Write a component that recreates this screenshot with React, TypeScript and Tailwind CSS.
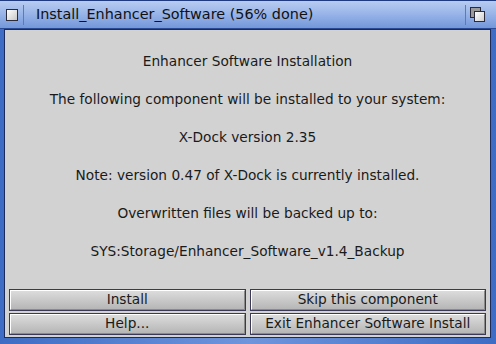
const LINES = [
  "Enhancer Software Installation",
  "The following component will be installed to your system:",
  "X-Dock version 2.35",
  "Note: version 0.47 of X-Dock is currently installed.",
  "Overwritten files will be backed up to:",
  "SYS:Storage/Enhancer_Software_v1.4_Backup",
];

const BUTTONS = ["Install", "Skip this component", "Help...", "Exit Enhancer Software Install"];

function Button({ label }: { label: string }) {
  return (
    <div className="h-[22px] border border-[#3a3a58] bg-[#3a3a58]">
      <div className="flex h-full items-center justify-center border-l border-t border-white border-r border-r-[#8a8a8a] border-b border-b-[#8a8a8a] bg-gradient-to-b from-[#dcdcdc] to-[#b6b6b6] text-[13.7px] leading-none text-[#1a1a1a]">
        {label}
      </div>
    </div>
  );
}

export default function App() {
  return (
    <div
      className="flex h-[344px] w-[496px] flex-col bg-gradient-to-r from-[#3e6cc4] via-[#6f95dc] to-[#3e6cc4]"
      style={{ fontFamily: '"DejaVu Sans", sans-serif' }}
    >
      <div className="flex h-[29px] shrink-0 items-center border-t border-[#1f3a80] border-b border-b-[#2a4a95] bg-gradient-to-b from-[#b8ccf1] via-[#97b3e8] to-[#7397da]">
        <div className="flex h-full w-[23px] items-center justify-center">
          <div className="h-[12px] w-[12px] border border-[#2a2a3a] bg-gradient-to-br from-white to-[#c8c8c8]" />
        </div>
        <div className="h-[20px] w-px bg-[#5a7ab8]" />
        <div className="pl-[12px] text-[14.4px] text-[#111]">Install_Enhancer_Software (56% done)</div>
        <div className="flex-1" />
        <div className="h-[20px] w-px bg-[#5a7ab8]" />
        <div className="relative mr-[10px] ml-[4px] h-[16px] w-[16px]">
          <div className="absolute left-0 top-0 h-[11px] w-[11px] border border-[#2a2a3a] bg-[#9a9a9a]" />
          <div className="absolute left-[4px] top-[4px] h-[11px] w-[11px] border border-[#2a2a3a] bg-gradient-to-br from-white to-[#cfcfcf]" />
        </div>
      </div>
      <div className="ml-[4px] mr-[5px] mb-[6px] flex flex-1 flex-col border border-[#1d2b5a] bg-[#d2d2d2]">
        <div className="flex flex-1 flex-col items-center pt-[22px] text-[13.7px] text-[#1a1a1a]">
          {LINES.map((line) => (
            <div key={line} className="h-[38px] leading-[18px]">
              {line}
            </div>
          ))}
        </div>
        <div className="grid grid-cols-2 gap-x-[4px] gap-y-[2px] px-[4px] pb-[2px]">
          {BUTTONS.map((b) => (
            <Button key={b} label={b} />
          ))}
        </div>
      </div>
    </div>
  );
}
